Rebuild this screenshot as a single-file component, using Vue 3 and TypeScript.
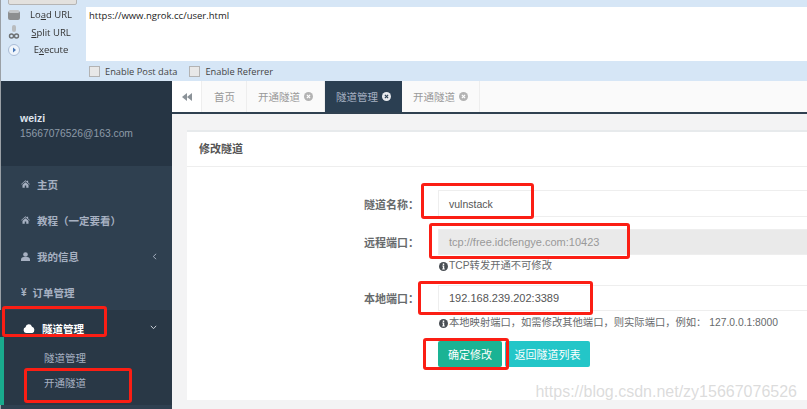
<script setup lang="ts">
const tools = [
  { pre: 'Lo', key: 'a', post: 'd URL', id: 'load' },
  { pre: '', key: 'S', post: 'plit URL', id: 'split' },
  { pre: 'E', key: 'x', post: 'ecute', id: 'exec' },
]
const tabs = [
  { name: '开通隧道', active: false },
  { name: '隧道管理', active: true },
  { name: '开通隧道', active: false },
]
</script>

<template>
  <div class="page">
    <header class="hackbar">
      <div class="tools">
        <div class="topbtn"></div>
        <div v-for="t in tools" :key="t.id" class="tool">
          <svg class="toolicon" viewBox="0 0 14 14" width="14" height="14">
            <template v-if="t.id === 'load'">
              <rect x="1" y="3" width="12" height="9" rx="2" fill="#8d8f90" />
              <rect x="2" y="2" width="10" height="3" rx="1" fill="#c3c6c8" />
            </template>
            <template v-else-if="t.id === 'split'">
              <rect x="5" y="0" width="4" height="7" rx="2" fill="#b9bcbe" />
              <circle cx="4.5" cy="11" r="2" fill="none" stroke="#6d7072" stroke-width="1.4" />
              <circle cx="9.5" cy="11" r="2" fill="none" stroke="#6d7072" stroke-width="1.4" />
            </template>
            <template v-else>
              <circle cx="7" cy="7" r="5.5" fill="#eef4fb" stroke="#a9bcd6" />
              <path d="M6 4.6 9 7 6 9.4Z" fill="#4a78b8" />
            </template>
          </svg>
          <span class="toolname">{{ t.pre }}<u>{{ t.key }}</u>{{ t.post }}</span>
        </div>
      </div>
      <div class="urlcol">
        <div class="urlbox">https://www.ngrok.cc/user.html</div>
        <div class="options">
          <label class="opt"><i class="check"></i>Enable Post data</label>
          <label class="opt"><i class="check"></i>Enable Referrer</label>
        </div>
      </div>
    </header>

    <div class="app">
      <aside class="sidebar">
        <div class="profile">
          <div class="uname">weizi</div>
          <div class="mail">15667076526@163.com</div>
        </div>
        <nav class="menu">
          <div class="item">
            <svg class="micon" viewBox="0 0 12 10"><path d="M6 0 0 5.2l.7.6L6 1.3l5.3 4.5.7-.6L9.5 3V.7H8v1ZM2 6v4h3V7h2v3h3V6L6 2.6Z" fill="currentColor" /></svg>
            <span>主页</span>
          </div>
          <div class="item">
            <svg class="micon" viewBox="0 0 12 10"><path d="M6 0 0 5.2l.7.6L6 1.3l5.3 4.5.7-.6L9.5 3V.7H8v1ZM2 6v4h3V7h2v3h3V6L6 2.6Z" fill="currentColor" /></svg>
            <span>教程（一定要看）</span>
          </div>
          <div class="item">
            <svg class="micon user" viewBox="0 0 10 10"><circle cx="5" cy="2.8" r="2.6" fill="currentColor" /><path d="M0 10V8.2C0 6.8 1.5 6 3 5.6h4c1.5.4 3 1.2 3 2.6V10Z" fill="currentColor" /></svg>
            <span>我的信息</span>
            <svg class="caret" viewBox="0 0 6 8" width="5" height="7"><path d="M5 .8 1.5 4 5 7.2" fill="none" stroke="currentColor" stroke-width="1.1" /></svg>
          </div>
          <div class="item yen">
            <span class="yenmark">¥</span>
            <span>订单管理</span>
          </div>
          <div class="group">
            <div class="grouphead">
              <svg class="cloud" viewBox="0 0 12 8" width="12" height="9" preserveAspectRatio="none"><path d="M3 8a2.6 2.6 0 0 1-.5-5.1A3.4 3.4 0 0 1 9 2.4 2.9 2.9 0 0 1 9.4 8Z" fill="#fff" /></svg>
              <span>隧道管理</span>
              <svg class="chev" viewBox="0 0 8 6" width="7" height="5"><path d="M.8 1 4 4.4 7.2 1" fill="none" stroke="currentColor" stroke-width="1.2" /></svg>
            </div>
            <div class="sub">隧道管理</div>
            <div class="sub">开通隧道</div>
          </div>
        </nav>
      </aside>

      <main class="main">
        <div class="tabbar">
          <div class="back">
            <svg viewBox="0 0 10 8" width="10" height="8"><path d="M5 0v8L0 4ZM10 0v8L5 4Z" fill="#8b9298" /></svg>
          </div>
          <div class="tab home">首页</div>
          <div v-for="(t, i) in tabs" :key="i" class="tab" :class="{ active: t.active }">
            {{ t.name }}
            <svg class="close" viewBox="0 0 10 10" width="9" height="9">
              <circle cx="5" cy="5" r="5" fill="currentColor" />
              <path d="M3.2 3.2l3.6 3.6M6.8 3.2 3.2 6.8" stroke="#fff" stroke-width="1.3" />
            </svg>
          </div>
        </div>
        <div class="content">
          <section class="card">
            <h5 class="cardtitle">修改隧道</h5>
            <form class="form" @submit.prevent>
              <div class="row first">
                <label class="lbl">隧道名称：</label>
                <div class="ctrl"><div class="input name">vulnstack</div></div>
              </div>
              <div class="row remote">
                <label class="lbl">远程端口：</label>
                <div class="ctrl"><div class="input disabled">tcp://free.idcfengye.com:10423</div></div>
              </div>
              <p class="hint">
                <svg class="info" viewBox="0 0 10 10" width="9" height="9"><circle cx="5" cy="5" r="5" fill="#4a4f54" /><path d="M4.2 1.8h1.6v1.4H4.2ZM3.7 4h2.1v3.2h.6v1H3.6v-1h.7V5h-.6Z" fill="#fff" /></svg>TCP转发开通不可修改
              </p>
              <div class="row local">
                <label class="lbl">本地端口：</label>
                <div class="ctrl"><div class="input">192.168.239.202:3389</div></div>
              </div>
              <p class="hint second">
                <svg class="info" viewBox="0 0 10 10" width="9" height="9"><circle cx="5" cy="5" r="5" fill="#4a4f54" /><path d="M4.2 1.8h1.6v1.4H4.2ZM3.7 4h2.1v3.2h.6v1H3.6v-1h.7V5h-.6Z" fill="#fff" /></svg>本地映射端口，如需修改其他端口，则实际端口，例如： 127.0.0.1:8000
              </p>
              <div class="btns">
                <button class="btn ok">确定修改</button>
                <button class="btn back2">返回隧道列表</button>
              </div>
            </form>
          </section>
        </div>
      </main>
    </div>

    <i class="mark mark-a"></i>
    <i class="mark mark-b"></i>
    <i class="mark box1"></i>
    <i class="mark box2"></i>
    <i class="mark box3"></i>
    <i class="mark box4"></i>
    <div class="watermark">https://blog.csdn.net/zy15667076526</div>
  </div>
</template>

<style>
html, body { margin: 0; background: #fff; }
</style>

<style scoped>
.page {
  position: relative;
  width: 807px;
  height: 409px;
  overflow: hidden;
  font-family: "Liberation Sans", "Noto Sans CJK SC", sans-serif;
  display: flex;
  flex-direction: column;
  filter: blur(0.3px);
}
.hackbar {
  height: 81px;
  flex: none;
  background: #d6e6f6;
  display: flex;
  padding-left: 1px;
  box-sizing: border-box;
  border-left: 1px solid #9aa0a6;
}
.tools { width: 84px; flex: none; position: relative; padding-top: 6px; box-sizing: border-box; }
.topbtn {
  position: absolute; left: 6px; top: -8px; width: 67px; height: 11px;
  background: #e3e1de; border: 1px solid #b5b5b5; border-radius: 2px;
}
.tool { height: 17.6px; display: flex; align-items: center; padding-left: 5px; }
.toolicon { flex: none; }
.toolname { flex: 1; text-align: center; font-size: 9.5px; color: #333; font-family: "Open Sans", sans-serif; padding-right: 9px; padding-left: 4px; white-space: nowrap; }
.toolname u { text-decoration-thickness: 1px; }
.urlcol { flex: 1; display: flex; flex-direction: column; padding-top: 7px; }
.urlbox {
  height: 54px; background: #fff; font-size: 9.5px; color: #222;
  font-family: "Open Sans", sans-serif; padding: 2px 3px; box-sizing: border-box;
}
.options { display: flex; gap: 12px; padding: 4px 0 0 3px; }
.opt { display: flex; align-items: center; font-size: 9.3px; color: #444; font-family: "Open Sans", sans-serif; }
.check { width: 9px; height: 9px; background: #e8e8e8; border: 1px solid #b3b3b3; margin-right: 5px; display: block; }
.app { flex: 1; display: flex; min-height: 0; }
.sidebar {
  width: 172px; flex: none; background: #2f4050; color: #a7b1c2;
  border-left: 1px solid #9aa0a6; box-sizing: border-box;
}
.profile { height: 85px; padding: 31px 0 0 19px; box-sizing: border-box; background: #263544; }
.uname { font-size: 10.5px; font-weight: 700; color: #dfe4ed; }
.mail { font-size: 10.3px; color: #8d9aa8; margin-top: 4px; }
.menu { display: flex; flex-direction: column; }
.item { height: 36px; display: flex; align-items: center; padding-left: 20px; font-size: 10.5px; font-weight: 700; color: #a7b1c2; position: relative; gap: 7px; }
.micon { width: 9px; height: 8px; flex: none; }
.micon.user { height: 9px; }
.caret { position: absolute; right: 15px; top: 15px; }
.yen { gap: 6px; }
.yenmark { font-weight: 700; font-size: 10px; }
.group { position: relative; background: #293846; margin-left: -1px; height: 95px; }
.group::before { content: ""; position: absolute; left: 0; top: 27px; bottom: 0; width: 4px; background: #19aa8d; }
.grouphead { height: 36px; display: flex; align-items: center; padding-left: 23px; gap: 7px; color: #fff; font-size: 10.5px; font-weight: 700; position: relative; }
.chev { position: absolute; right: 15px; top: 15px; color: #c8ced6; }
.sub { height: 25px; padding-left: 44px; font-size: 10.5px; line-height: 24px; font-weight: 400; color: #a7b1c2; }
.main { flex: 1; min-width: 0; display: flex; flex-direction: column; background: #f3f3f4; }
.tabbar { height: 33px; flex: none; display: flex; background: #fafafa; border-bottom: 2px solid #2f4050; box-sizing: border-box; }
.back { width: 30px; display: flex; align-items: center; justify-content: center; background: #fff; border-right: 1px solid #eee; box-sizing: border-box; }
.tab { display: flex; align-items: center; gap: 4px; padding: 0 11px; font-size: 10.5px; color: #999; border-right: 1px solid #eee; white-space: nowrap; }
.tab.home { padding: 0 11px 0 12px; }
.tab .close { color: #b3b3b3; }
.tab.active { background: #2b3f52; color: #a7b1c2; border-right: 0; }
.tab.active .close { color: #e8ebef; }
.tab.active .close path { stroke: #2b3f52; }
.content { flex: 1; padding: 16px 0 0 15px; }
.card { background: #fff; height: 268px; border-top: 2px solid #e7eaec; }
.cardtitle { margin: 0; height: 35px; line-height: 34px; padding-left: 12px; font-size: 11px; font-weight: 700; color: #555; border-bottom: 1px solid #eee; box-sizing: border-box; }
.form { padding: 23px 0 0; }
.row { display: flex; align-items: center; height: 26px; }
.row.first { height: 27px; }
.row.remote { margin-top: 12px; }
.row.local { margin-top: 13px; }
.lbl { width: 251px; flex: none; text-align: right; padding-right: 19px; box-sizing: border-box; font-size: 11px; font-weight: 700; color: #676a6c; white-space: nowrap; }
.ctrl { flex: 1; }
.input { height: 26px; line-height: 25px; padding-left: 10px; font-size: 11px; color: #555; border: 1px solid #eee; border-right: 0; box-sizing: border-box; background: #fff; }
.input.name { height: 27px; line-height: 26px; font-size: 10.5px; }
.input.disabled { background: #eaeaea; color: #999; }
.hint { margin: 5px 0 0 252px; height: 12px; line-height: 12px; font-size: 10.3px; color: #676a6c; display: flex; align-items: center; white-space: nowrap; }
.hint.second { margin-top: 6px; }
.info { margin-right: 1px; flex: none; }
.btns { display: flex; gap: 3px; margin: 12px 0 0 251px; }
.btn { height: 26px; border: 0; border-radius: 2px; color: #fff; font-family: inherit; font-size: 11px; padding: 0; }
.ok { width: 64px; background: #1ab394; }
.back2 { width: 85px; background: #23c6c8; }
.mark { position: absolute; display: block; border: 3px solid #fb1e14; border-radius: 3px; box-sizing: border-box; pointer-events: none; }
.mark-a { left: 2px; top: 306px; width: 105px; height: 31px; }
.mark-b { left: 24px; top: 368px; width: 108px; height: 35px; }
.box1 { left: 421px; top: 183px; width: 113px; height: 36px; }
.box2 { left: 429px; top: 223px; width: 201px; height: 36px; }
.box3 { left: 418px; top: 281px; width: 175px; height: 34px; }
.box4 { left: 423px; top: 338px; width: 86px; height: 32px; }
.watermark { position: absolute; right: 10px; bottom: 8px; font-size: 16px; color: rgba(190,190,190,.55); white-space: nowrap; }
</style>
